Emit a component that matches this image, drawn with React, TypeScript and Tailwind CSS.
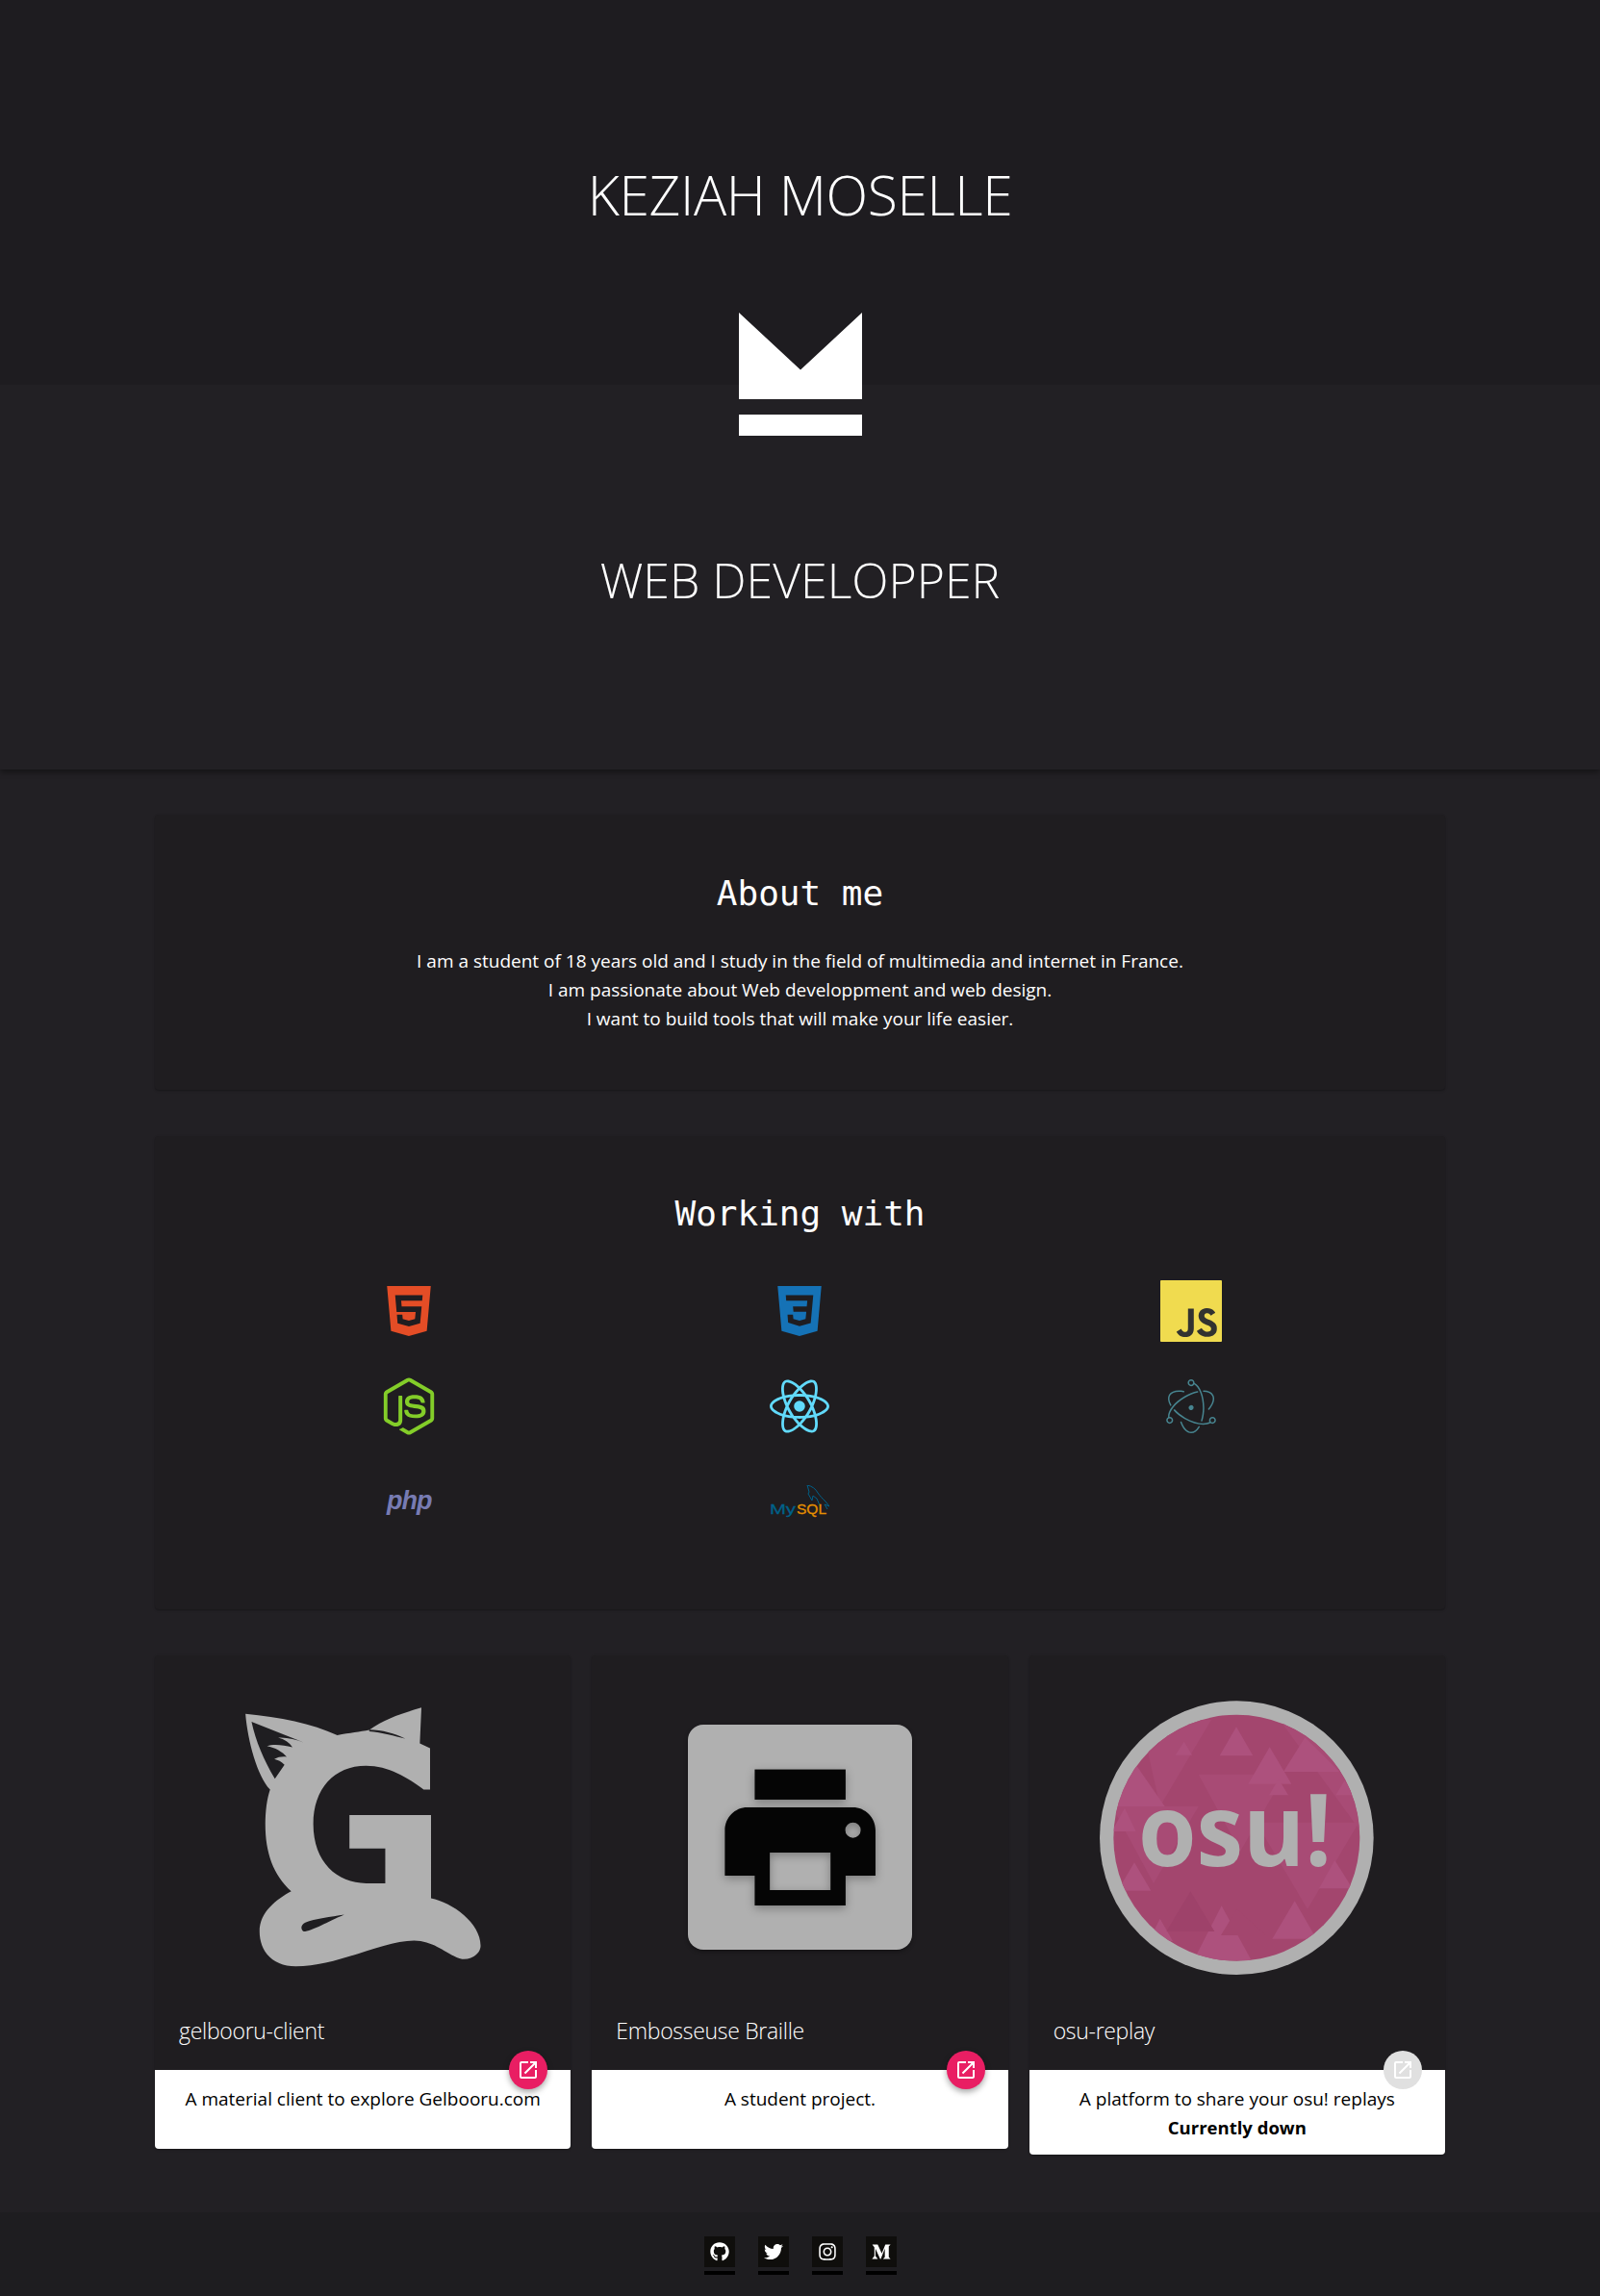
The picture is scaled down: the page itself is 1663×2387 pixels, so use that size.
import { FaGithub, FaTwitter, FaInstagram, FaMediumM, FaNodeJs } from "react-icons/fa";
import { MdOpenInNew } from "react-icons/md";
import { SiHtml5, SiCss3, SiJavascript, SiReact, SiElectron } from "react-icons/si";

function Logo() {
  return (
    <svg viewBox="0 0 128 128" className="w-[128px] h-[128px] fill-white">
      <path d="M0 0L64 59.5L128 0V90H0Z" />
      <rect x="0" y="106" width="128" height="22" />
    </svg>
  );
}

function JsIcon() {
  return (
    <div className="w-[64px] h-[64px] bg-[#323330] rounded-[1px] overflow-hidden">
      <SiJavascript size={64} color="#f0db4f" />
    </div>
  );
}

function PhpIcon() {
  return (
    <span className="font-['Liberation_Sans',sans-serif] font-bold italic text-[27px] leading-none tracking-[-1px] text-[#777bb3]">
      php
    </span>
  );
}

function MysqlIcon() {
  return (
    <svg viewBox="0 0 62 34" className="w-[62px] h-[34px]">
      <path
        d="M39 0C44 1 48 4 50 8C52 11 55 14 58 17L62 22L57 20L60 25M39 0L41 7L40 9L44 16L45 11L49 14L52 21"
        fill="none"
        stroke="#00618a"
        strokeWidth="1"
      />
      <text x="0" y="30" fontFamily="'Liberation Sans', sans-serif" fontSize="15.5" textLength="27" lengthAdjust="spacingAndGlyphs" fill="#00618a" stroke="#00618a" strokeWidth="0.3">
        My
      </text>
      <text x="28" y="29.5" fontFamily="'Liberation Sans', sans-serif" fontSize="15.5" textLength="31" lengthAdjust="spacingAndGlyphs" fill="#e48e00" stroke="#e48e00" strokeWidth="0.3">
        SQL
      </text>
    </svg>
  );
}

function GelbooruLogo() {
  return (
    <svg viewBox="313 195 736 812" className="w-[245px] h-[270px]">
      <path
        fill="#b0b0b0"
        d="M313 215C420 225 520 245 600 282C640 275 670 272 700 266C750 230 800 215 863 196L858 308L890 323L890 452L870 452C820 415 760 378 690 378C590 378 525 450 525 560C525 680 600 745 690 745L750 745L750 636L638 636L638 532L893 532L893 792C960 805 1048 870 1048 940C1048 965 1020 985 990 982C950 975 910 925 840 924C740 925 600 1005 470 1005C400 1005 357 960 357 895C357 835 410 795 456 770C400 720 375 650 375 560C375 520 380 480 390 452C350 410 320 300 313 215Z"
      />
      <path
        fill="#1f1e21"
        d="M332 240L495 305C470 295 440 288 415 290C435 295 450 305 460 320C430 312 400 310 380 316C405 320 430 335 442 350C430 348 415 350 403 357C415 360 425 365 435 375L405 418C370 360 345 300 332 240Z"
      />
      <path fill="#1f1e21" d="M622 843C580 850 530 855 500 868C485 875 485 890 495 896C520 895 570 865 622 843Z" />
      <path fill="#1f1e21" d="M700 265C740 266 780 276 812 293C780 284 740 274 700 270Z" />
    </svg>
  );
}

function PrinterLogo() {
  return (
    <div className="w-[233px] h-[234px] rounded-[16px] bg-[#b0b0b0] shadow-[0_2px_4px_rgba(0,0,0,0.35)]">
      <svg viewBox="105 127 698 700" className="w-full h-full drop-shadow-[0_3px_5px_rgba(0,0,0,0.3)]">
        <rect x="313" y="266" width="283" height="94" fill="#050505" />
        <path
          fill="#050505"
          fillRule="evenodd"
          d="M290 384H618C658 384 689 416 689 455V597H596V690H313V597H220V455C220 416 251 384 290 384ZM360 525V642H549V525ZM619 431A24 24 0 1 0 619 479A24 24 0 1 0 619 431Z"
        />
      </svg>
    </div>
  );
}

const osuFacets = [
  "200,110 420,110 260,380",
  "380,280 650,280 510,520",
  "640,120 880,120 880,450",
  "110,380 380,380 240,620",
  "560,430 880,430 720,700",
];

const osuLight = [
  "498,132 550,222 446,222",
  "335,178 360,220 308,220",
  "712,165 820,272 645,272",
  "602,195 670,310 535,310",
  "630,295 660,345 600,345",
  "185,250 275,380 100,380",
  "150,385 185,458 110,458",
  "180,555 232,643 128,643",
  "805,548 860,636 756,636",
  "680,675 748,793 610,793",
  "452,690 545,860 365,860",
  "260,730 300,800 225,800",
  "835,300 870,345 808,345",
];

function OsuLogo() {
  return (
    <svg viewBox="72 50 855 855" className="w-[285px] h-[285px]">
      <defs>
        <clipPath id="osu-clip">
          <circle cx="499" cy="478" r="384" />
        </clipPath>
      </defs>
      <circle cx="499" cy="478" r="427" fill="#b0b0b0" />
      <g clipPath="url(#osu-clip)">
        <rect x="72" y="50" width="855" height="855" fill="#a3466e" />
        {osuFacets.map((p) => (
          <polygon key={p} points={p} fill="#a84b75" />
        ))}
        {osuLight.map((p) => (
          <polygon key={p} points={p} fill="#ad517d" />
        ))}
        <polygon points="355,645 430,770 280,770" fill="#9e426a" />
        <polygon points="500,700 590,782 450,782" fill="#a3466e" />
      </g>
      <text
        x="192"
        y="566"
        fontFamily="'Open Sans', sans-serif"
        fontWeight="700"
        fontSize="310"
        textLength="604"
        lengthAdjust="spacingAndGlyphs"
        fill="#b0b0b0"
      >
        osu!
      </text>
    </svg>
  );
}

const tools = [
  <SiHtml5 size={52} color="#e44d26" />,
  <SiCss3 size={52} color="#1572b6" />,
  <JsIcon />,
  <FaNodeJs size={60} color="#83cd29" />,
  <SiReact size={62} color="#61dafb" />,
  <SiElectron size={56} color="#47848f" />,
  <PhpIcon />,
  <MysqlIcon />,
];

const projects = [
  {
    name: "gelbooru-client",
    logo: <GelbooruLogo />,
    desc: "A material client to explore Gelbooru.com",
    btn: "bg-[#e91e63] shadow-[0_3px_6px_rgba(0,0,0,0.35)]",
  },
  {
    name: "Embosseuse Braille",
    logo: <PrinterLogo />,
    desc: "A student project.",
    btn: "bg-[#e91e63] shadow-[0_3px_6px_rgba(0,0,0,0.35)]",
  },
  {
    name: "osu-replay",
    logo: <OsuLogo />,
    desc: "A platform to share your osu! replays",
    down: true,
    btn: "bg-[#e0e0e0]",
  },
];

const socials = [
  <FaGithub size={20} />,
  <FaTwitter size={20} />,
  <FaInstagram size={20} />,
  <FaMediumM size={20} />,
];

function App() {
  return (
    <div className="min-h-[2387px] bg-[#222024] text-white font-['Open_Sans',sans-serif] flex flex-col">
      <header className="relative h-[800px] shadow-[0_3px_6px_rgba(0,0,0,0.4)]">
        <div className="h-[400px] bg-[#1e1c20] flex items-center justify-center">
          <h1 className="text-[57px] font-light leading-none tracking-[-0.4px] mt-[4px]">KEZIAH MOSELLE</h1>
        </div>
        <div className="h-[400px] flex items-center justify-center">
          <h2 className="text-[50px] font-light leading-none mt-[6px]">WEB DEVELOPPER</h2>
        </div>
        <div className="absolute left-[768px] top-[325px]">
          <Logo />
        </div>
      </header>

      <main className="px-[161px] pt-[47px] flex flex-col gap-[48px]">
        <section className="h-[286px] bg-[#1f1d20] rounded-[4px] shadow-[0_1px_3px_rgba(0,0,0,0.2),0_1px_1px_rgba(0,0,0,0.1)] pt-[60px] text-center">
          <h3 className="font-['DejaVu_Sans_Mono',monospace] text-[36px] leading-[44px]">About me</h3>
          <p className="mt-[33px] text-[19px] leading-[30px]">
            I am a student of 18 years old and I study in the field of multimedia and internet in France.
            <br />
            I am passionate about Web developpment and web design.
            <br />
            I want to build tools that will make your life easier.
          </p>
        </section>

        <section className="h-[492px] bg-[#1f1d20] rounded-[4px] shadow-[0_1px_3px_rgba(0,0,0,0.2),0_1px_1px_rgba(0,0,0,0.1)] pt-[59px]">
          <h3 className="font-['DejaVu_Sans_Mono',monospace] text-[36px] leading-[44px] text-center">Working with</h3>
          <div className="mt-[29px] mx-[61px] grid grid-cols-3 auto-rows-[99px]">
            {tools.map((icon, i) => (
              <div key={i} className="flex items-center justify-center">
                {icon}
              </div>
            ))}
          </div>
        </section>

        <section className="grid grid-cols-3 gap-[22px] items-start">
          {projects.map((p) => (
            <article key={p.name} className="rounded-[4px] bg-[#1f1d20] shadow-[0_1px_3px_rgba(0,0,0,0.2),0_1px_1px_rgba(0,0,0,0.1)]">
              <div className="h-[378px] flex items-center justify-center">{p.logo}</div>
              <div className="relative h-[53px] px-[25px]">
                <span className="text-[23px] font-light leading-[24px] tracking-[-0.3px] block">{p.name}</span>
                <a className={`absolute right-[24px] -bottom-[20px] z-10 w-[40px] h-[40px] rounded-full flex items-center justify-center text-white ${p.btn}`}>
                  <MdOpenInNew size={24} />
                </a>
              </div>
              <div className="min-h-[82px] bg-white rounded-b-[4px] px-[20px] pt-[15px] pb-[13px] text-center text-black text-[19px] leading-[30px]">
                {p.desc}
                {p.down && <div className="font-bold text-[18.5px]">Currently down</div>}
              </div>
            </article>
          ))}
        </section>
      </main>

      <footer className="mt-auto h-[87px] bg-[#1e1d20] flex justify-center gap-[24px] pt-[25px]">
        {socials.map((icon, i) => (
          <a key={i} className="flex flex-col gap-[4px]">
            <span className="w-[32px] h-[32px] bg-[#0f0e0c] flex items-center justify-center text-white">{icon}</span>
            <span className="w-[32px] h-[4px] bg-black" />
          </a>
        ))}
      </footer>
    </div>
  );
}

export default App;
